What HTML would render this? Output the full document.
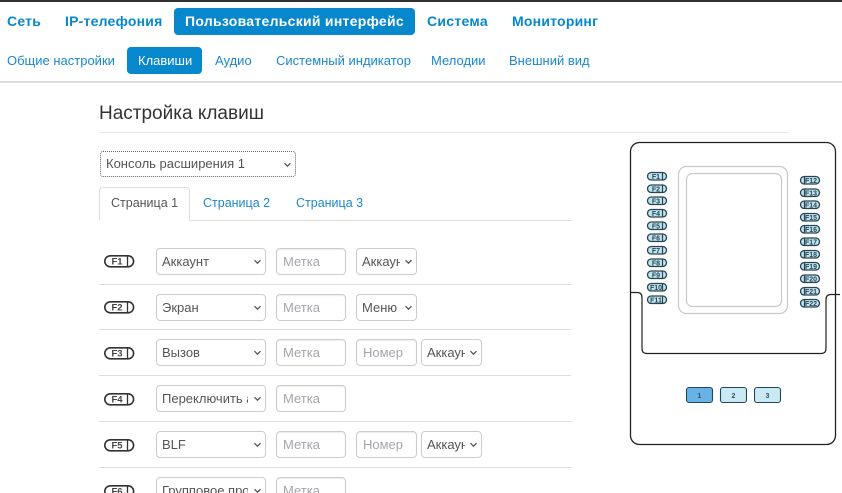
<!DOCTYPE html>
<html><head><meta charset="utf-8">
<style>
html{margin:0;padding:0;background:#fff;width:842px;height:493px;overflow:hidden}
body{margin:0;padding:0;background:#fff;width:842px;height:493px;position:relative;overflow:hidden;font-family:"Liberation Sans",sans-serif;font-size:13px;color:#555}
.a{position:absolute;white-space:nowrap}
.n{font-weight:bold;font-size:14px;letter-spacing:.22px;color:#0787cc;top:13px;line-height:17px}
.s{font-size:13px;letter-spacing:0;color:#1b88cf;top:52px;line-height:17px}
.pill{background:#0787cc;color:#fff;border-radius:4px}
.line{position:absolute;height:1px;background:#ddd}
.c{position:absolute;box-sizing:border-box;height:27px;border:1px solid #ccc;border-radius:4px;background:#fff;box-shadow:inset 0 1px 1px rgba(0,0,0,.075);font-size:13px;line-height:25px;overflow:hidden;white-space:nowrap}
.sel{color:#555;padding-left:5px;box-shadow:none}
.sel span{display:block;overflow:hidden}
.sel svg{position:absolute;right:3px;top:10px}
.inp{color:#a5a5ad;padding-left:6px}
.t{position:absolute;font-size:12.5px;line-height:17px;letter-spacing:0;color:#1b88cf;top:195px}
svg text{font-family:"Liberation Sans",sans-serif;font-weight:bold}
</style></head><body>
<div class="a" style="left:0;top:0;width:842px;height:2px;background:#333"></div>
<div class="a n" style="left:7px">Сеть</div>
<div class="a n" style="left:65px">IP-телефония</div>
<div class="a pill" style="left:174px;top:8px;width:241px;height:27px"></div>
<div class="a n" style="left:185px;color:#fff;letter-spacing:.28px">Пользовательский интерфейс</div>
<div class="a n" style="left:427px;letter-spacing:.28px">Система</div>
<div class="a n" style="left:512px">Мониторинг</div>

<div class="a s" style="left:7px">Общие настройки</div>
<div class="a pill" style="left:127px;top:47px;width:75px;height:27px"></div>
<div class="a s" style="left:138px;color:#fff">Клавиши</div>
<div class="a s" style="left:215px">Аудио</div>
<div class="a s" style="left:276px">Системный индикатор</div>
<div class="a s" style="left:431px">Мелодии</div>
<div class="a s" style="left:509px">Внешний вид</div>
<div class="a" style="left:0;top:81px;width:842px;height:2px;background:#ddd"></div>

<div class="a" style="left:99px;top:102px;font-size:19px;line-height:24px;color:#333">Настройка клавиш</div>
<div class="line" style="left:99px;top:132px;width:690px;background:#e6e6e6"></div>

<div class="c sel" style="left:100px;top:151px;width:196px;border:1px dotted #666;border-radius:3px;height:26px;line-height:24px"><span>Консоль расширения 1</span><svg width="9" height="6"><path d="M1.500 1.200l3 3 3-3" fill="none" stroke="#555" stroke-width="1.300"/></svg></div>

<div class="a" style="left:99px;top:187px;width:91px;height:34px;box-sizing:border-box;border:1px solid #ddd;border-bottom:1px solid #fff;border-radius:4px 4px 0 0;background:#fff;z-index:2"></div>
<div class="line" style="left:99px;top:220px;width:472px"></div>
<div class="t" style="left:111px;color:#555;z-index:3">Страница 1</div>
<div class="t" style="left:203px">Страница 2</div>
<div class="t" style="left:296px">Страница 3</div>

<svg class="a" style="left:0;top:0" width="842" height="493">
<defs><g id="k"><rect x="0.800" y="0.800" width="28.800" height="11" rx="5.500" fill="#fff" stroke="#333" stroke-width="1.600"/><path d="M23.500 1v11" stroke="#333" stroke-width="1.300"/></g></defs>
<g font-size="9.500" fill="#444" text-anchor="middle">
<use href="#k" x="104" y="255"/><text x="117" y="264.500">F1</text>
<use href="#k" x="104" y="301"/><text x="117" y="310.500">F2</text>
<use href="#k" x="104" y="347"/><text x="117" y="356.500">F3</text>
<use href="#k" x="104" y="393"/><text x="117" y="402.500">F4</text>
<use href="#k" x="104" y="439"/><text x="117" y="448.500">F5</text>
<use href="#k" x="104" y="485"/><text x="117" y="494.500">F6</text>
</g>
</svg>

<div class="line" style="left:99px;top:284px;width:472px"></div>
<div class="line" style="left:99px;top:329px;width:472px"></div>
<div class="line" style="left:99px;top:375px;width:472px"></div>
<div class="line" style="left:99px;top:421px;width:472px"></div>
<div class="line" style="left:99px;top:467px;width:472px"></div>

<!-- row 1 -->
<div class="c sel" style="left:156px;top:248px;width:110px"><span style="width:83px">Аккаунт</span><svg width="9" height="6"><path d="M1.500 1.200l3 3 3-3" fill="none" stroke="#555" stroke-width="1.300"/></svg></div>
<div class="c inp" style="left:276px;top:248px;width:70px">Метка</div>
<div class="c sel" style="left:356px;top:248px;width:61px"><span style="width:38px">Аккаунт</span><svg width="9" height="6"><path d="M1.500 1.200l3 3 3-3" fill="none" stroke="#555" stroke-width="1.300"/></svg></div>
<!-- row 2 -->
<div class="c sel" style="left:156px;top:294px;width:110px"><span style="width:83px">Экран</span><svg width="9" height="6"><path d="M1.500 1.200l3 3 3-3" fill="none" stroke="#555" stroke-width="1.300"/></svg></div>
<div class="c inp" style="left:276px;top:294px;width:70px">Метка</div>
<div class="c sel" style="left:356px;top:294px;width:61px"><span style="width:38px">Меню</span><svg width="9" height="6"><path d="M1.500 1.200l3 3 3-3" fill="none" stroke="#555" stroke-width="1.300"/></svg></div>
<!-- row 3 -->
<div class="c sel" style="left:156px;top:339px;width:110px"><span style="width:83px">Вызов</span><svg width="9" height="6"><path d="M1.500 1.200l3 3 3-3" fill="none" stroke="#555" stroke-width="1.300"/></svg></div>
<div class="c inp" style="left:276px;top:339px;width:70px">Метка</div>
<div class="c inp" style="left:356px;top:339px;width:61px">Номер</div>
<div class="c sel" style="left:421px;top:339px;width:61px"><span style="width:38px">Аккаунт</span><svg width="9" height="6"><path d="M1.500 1.200l3 3 3-3" fill="none" stroke="#555" stroke-width="1.300"/></svg></div>
<!-- row 4 -->
<div class="c sel" style="left:156px;top:385px;width:110px"><span style="width:86px">Переключить аккаунт</span><svg width="9" height="6"><path d="M1.500 1.200l3 3 3-3" fill="none" stroke="#555" stroke-width="1.300"/></svg></div>
<div class="c inp" style="left:276px;top:385px;width:70px">Метка</div>
<!-- row 5 -->
<div class="c sel" style="left:156px;top:431px;width:110px"><span style="width:83px">BLF</span><svg width="9" height="6"><path d="M1.500 1.200l3 3 3-3" fill="none" stroke="#555" stroke-width="1.300"/></svg></div>
<div class="c inp" style="left:276px;top:431px;width:70px">Метка</div>
<div class="c inp" style="left:356px;top:431px;width:61px">Номер</div>
<div class="c sel" style="left:421px;top:431px;width:61px"><span style="width:38px">Аккаунт</span><svg width="9" height="6"><path d="M1.500 1.200l3 3 3-3" fill="none" stroke="#555" stroke-width="1.300"/></svg></div>
<!-- row 6 -->
<div class="c sel" style="left:156px;top:477px;width:110px"><span style="width:86px">Групповое прослушивание</span><svg width="9" height="6"><path d="M1.500 1.200l3 3 3-3" fill="none" stroke="#555" stroke-width="1.300"/></svg></div>
<div class="c inp" style="left:276px;top:477px;width:70px">Метка</div>

<!-- device -->
<svg class="a" style="left:0;top:0" width="842" height="493">
<defs>
<g id="l"><rect x="0.500" y="0.500" width="19" height="7.500" rx="3.700" fill="#bfe3ef" stroke="#274552" stroke-width="1.300"/><path d="M15.500 1v7" stroke="#274552" stroke-width="1.200"/></g>
<g id="r"><rect x="0.500" y="0.500" width="19" height="7.500" rx="3.700" fill="#bfe3ef" stroke="#274552" stroke-width="1.300"/><path d="M4.500 1v7" stroke="#274552" stroke-width="1.200"/></g>
</defs>
<rect x="630.500" y="142.500" width="205" height="302" rx="9" fill="#fff" stroke="#222" stroke-width="1.300"/>
<rect x="678.500" y="166.500" width="109" height="147" rx="8" fill="#fff" stroke="#c8c8c8" stroke-width="1.200"/>
<rect x="686.500" y="173.500" width="95" height="133" rx="6" fill="#fff" stroke="#c8c8c8" stroke-width="1.200"/>
<path d="M631 292.500h6q5 0 5 5v51q0 5 5 5h174q5 0 5-5v-49q0-5 5-5h9" fill="none" stroke="#222" stroke-width="1.200"/>
<g font-size="7" fill="#2c4854" text-anchor="middle" style="filter:blur(.3px)">
<use href="#l" x="647" y="172"/><text x="656" y="179">F1</text>
<use href="#l" x="647" y="184.500"/><text x="656" y="191.500">F2</text>
<use href="#l" x="647" y="196.500"/><text x="656" y="203.500">F3</text>
<use href="#l" x="647" y="209"/><text x="656" y="216">F4</text>
<use href="#l" x="647" y="221.500"/><text x="656" y="228.500">F5</text>
<use href="#l" x="647" y="233.500"/><text x="656" y="240.500">F6</text>
<use href="#l" x="647" y="246"/><text x="656" y="253">F7</text>
<use href="#l" x="647" y="258.500"/><text x="656" y="265.500">F8</text>
<use href="#l" x="647" y="270.500"/><text x="656" y="277.500">F9</text>
<use href="#l" x="647" y="283"/><text x="656" y="290">F10</text>
<use href="#l" x="647" y="295.500"/><text x="656" y="302.500">F11</text>
<use href="#r" x="800" y="176"/><text x="811" y="183">F12</text>
<use href="#r" x="800" y="188.500"/><text x="811" y="195.500">F13</text>
<use href="#r" x="800" y="200.500"/><text x="811" y="207.500">F14</text>
<use href="#r" x="800" y="213"/><text x="811" y="220">F15</text>
<use href="#r" x="800" y="225"/><text x="811" y="232">F16</text>
<use href="#r" x="800" y="237.500"/><text x="811" y="244.500">F17</text>
<use href="#r" x="800" y="250"/><text x="811" y="257">F18</text>
<use href="#r" x="800" y="262"/><text x="811" y="269">F19</text>
<use href="#r" x="800" y="274.500"/><text x="811" y="281.500">F20</text>
<use href="#r" x="800" y="287"/><text x="811" y="294">F21</text>
<use href="#r" x="800" y="299"/><text x="811" y="306">F22</text>
</g>
<g font-size="7" fill="#33505c" text-anchor="middle">
<rect x="686.500" y="387.500" width="26" height="15" rx="2.500" fill="#67b3e8" stroke="#274552" stroke-width="1.100"/><text x="699.500" y="398">1</text>
<rect x="720.500" y="387.500" width="26" height="15" rx="2.500" fill="#c9eaf5" stroke="#274552" stroke-width="1.100"/><text x="733.500" y="398">2</text>
<rect x="754.500" y="387.500" width="26" height="15" rx="2.500" fill="#c9eaf5" stroke="#274552" stroke-width="1.100"/><text x="767.500" y="398">3</text>
</g>
</svg>
</body></html>
